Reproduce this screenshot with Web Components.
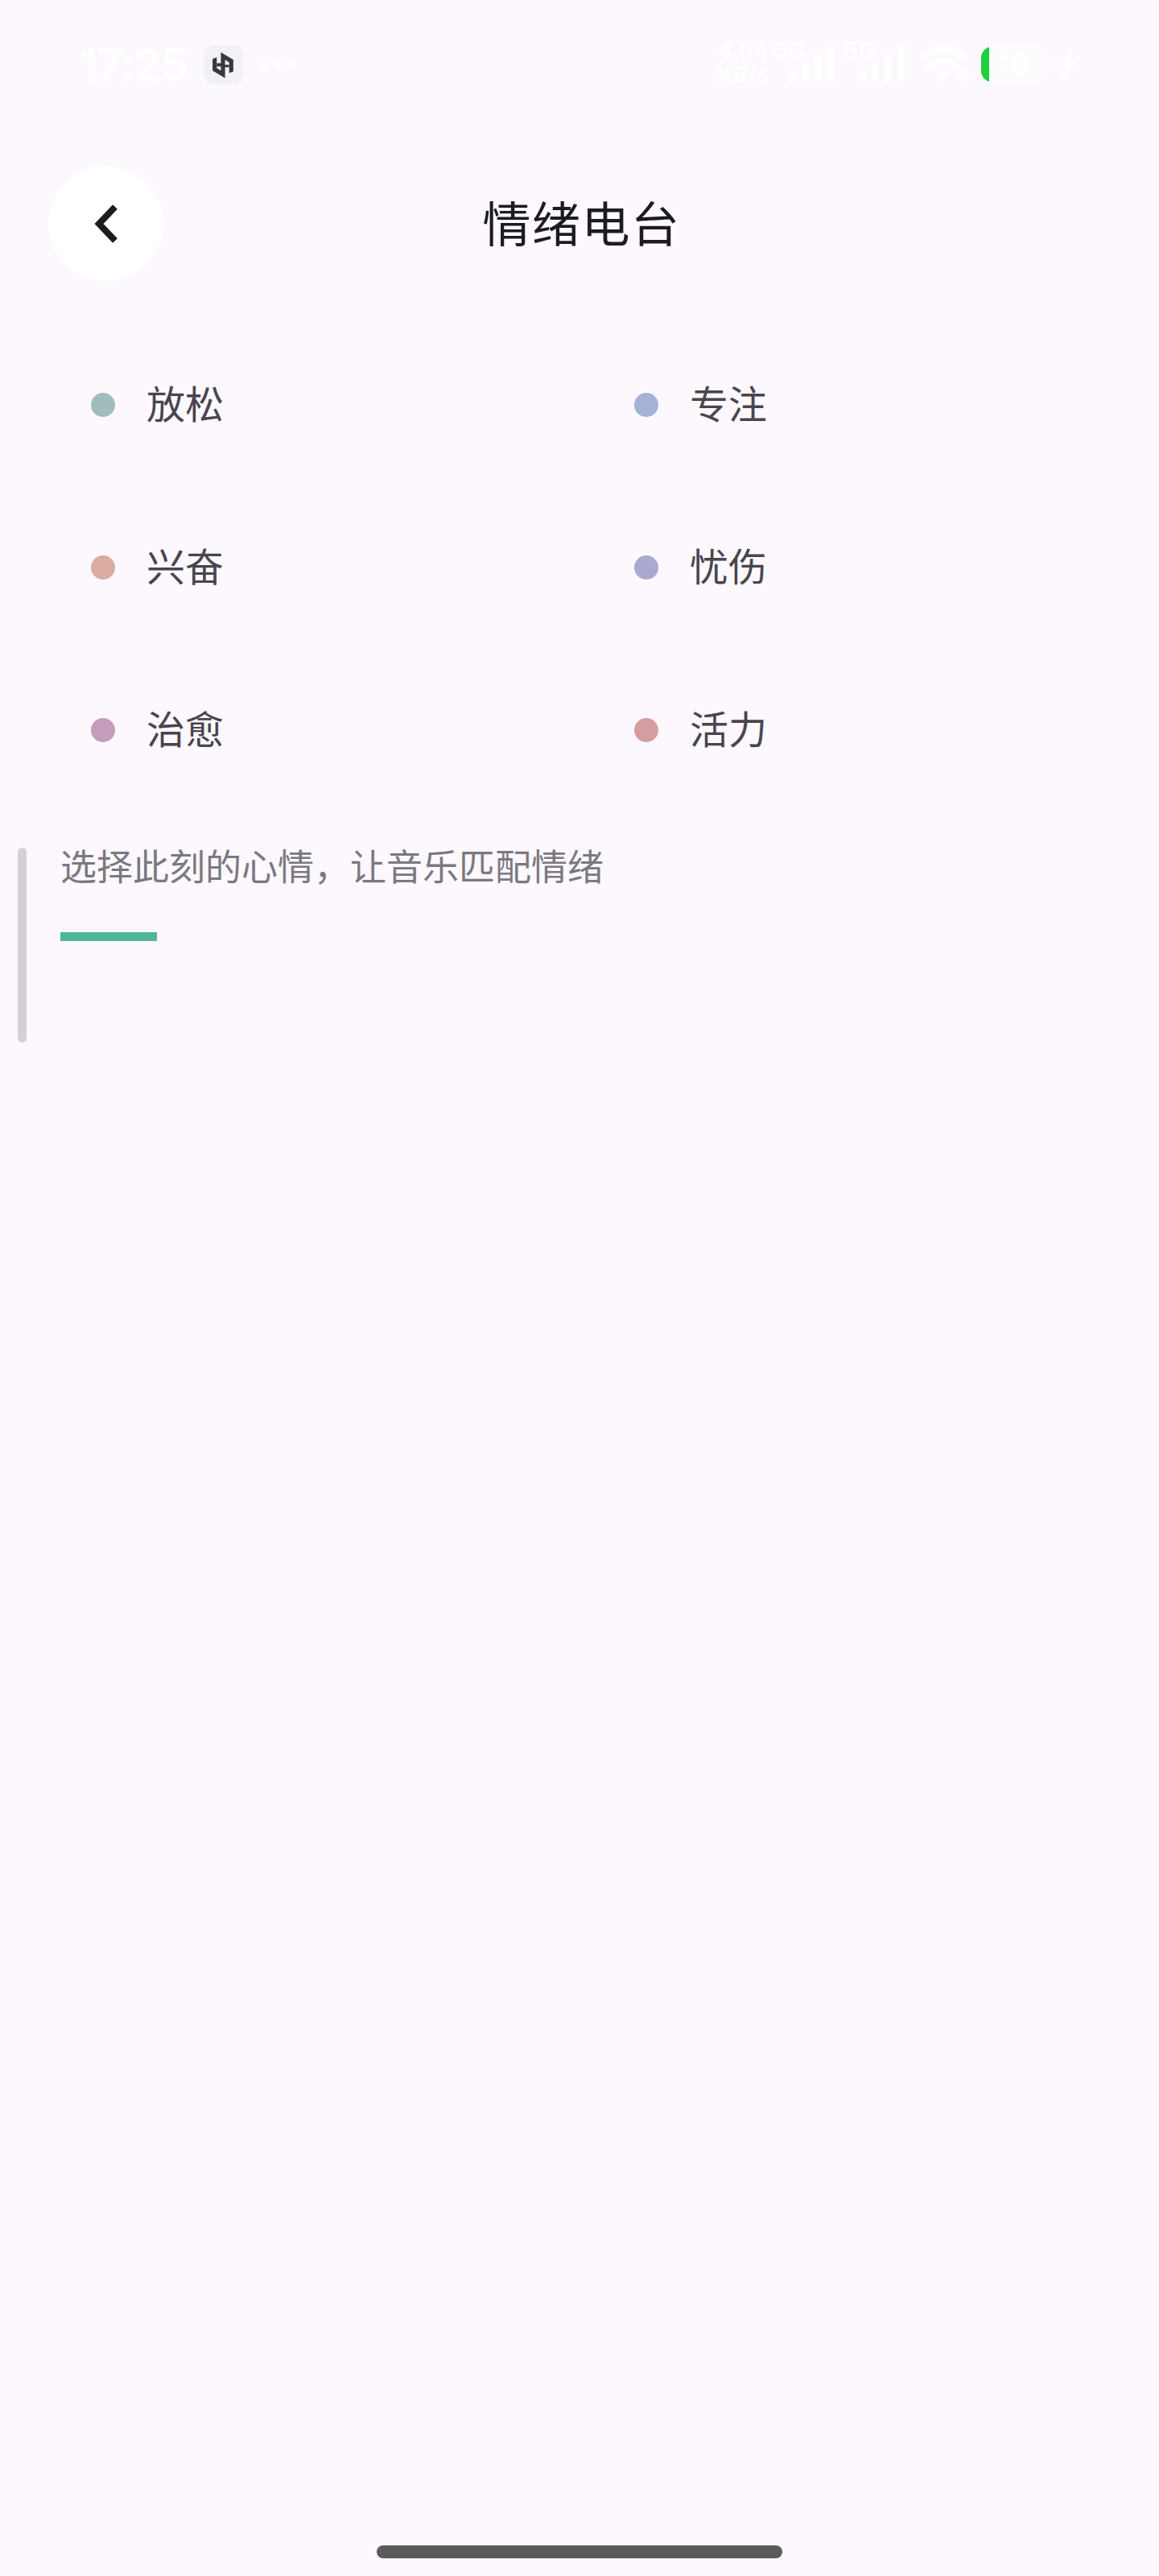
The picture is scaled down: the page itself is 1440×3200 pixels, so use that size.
<!DOCTYPE html>
<html lang="zh">
<head>
<meta charset="utf-8">
<title>情绪电台</title>
<style>
    html, body { margin: 0; background: #fcf8fe; }
    body { font-family: "Noto Sans CJK SC", "Noto Sans", sans-serif; }
</style>
</head>
<body>

<mood-page>
    <status-bar slot="status"></status-bar>
    <page-header slot="header">情绪电台</page-header>
    <mood-item color="#a0bdbd">放松</mood-item>
    <mood-item color="#a3b2d6">专注</mood-item>
    <mood-item color="#dbaca0">兴奋</mood-item>
    <mood-item color="#a8a8d0">忧伤</mood-item>
    <mood-item color="#c59cb9">治愈</mood-item>
    <mood-item color="#d69da0">活力</mood-item>
    <mood-hint slot="hint">选择此刻的心情，让音乐匹配情绪</mood-hint>
</mood-page>

<script>
class MoodPage extends HTMLElement {
    constructor() {
        super()
        this.attachShadow({ mode: 'open' }).innerHTML = `
            <style>
                :host { display: flex; flex-direction: column; height: 3200px; background: #fcf8fe; }
                #grid {
                    display: grid;
                    grid-template-columns: 675px 1fr;
                    grid-auto-rows: 202px;
                    padding: 53px 0 0 113px;
                }
                #home {
                    width: 504px;
                    height: 16px;
                    margin: auto auto 22px;
                    border-radius: 8px;
                    background: #5c5a5d;
                }
            </style>
            <slot name="status"></slot>
            <slot name="header"></slot>
            <div id="grid"><slot></slot></div>
            <slot name="hint"></slot>
            <div id="home"></div>
        `
    }
}

class StatusBar extends HTMLElement {
    constructor() {
        super()
        const bars = `
            <svg width="57" height="44" viewBox="0 0 57 44" fill="#fff">
                <rect x="0" y="30" width="10" height="14" rx="2"/>
                <rect x="16" y="21" width="9" height="23" rx="2"/>
                <rect x="32" y="10" width="9" height="34" rx="2"/>
                <rect x="48" y="0" width="9" height="44" rx="2"/>
            </svg>`
        this.attachShadow({ mode: 'open' }).innerHTML = `
            <style>
                :host {
                    display: flex;
                    align-items: center;
                    height: 161px;
                    box-sizing: border-box;
                    padding: 0 102px 0 98px;
                    color: #fff;
                    font-family: Inter, "Liberation Sans", sans-serif;
                }
                #time { font-size: 55px; font-weight: 600; line-height: 1; letter-spacing: -1px; }
                #app {
                    width: 49px; height: 49px;
                    margin-left: 20px;
                    border-radius: 12px;
                    background: #f1f2f4;
                    display: flex; align-items: center; justify-content: center;
                }
                #more { display: flex; gap: 8px; margin-left: 22px; }
                #more i { width: 9px; height: 9px; border-radius: 50%; background: #fff; }
                #right { margin-left: auto; margin-top: -12px; display: flex; align-items: flex-end; height: 52px; }
                #speed { width: 69px; font-size: 27px; font-weight: 700; line-height: 30px; white-space: nowrap; margin-bottom: -7px; }
                .net { position: relative; display: flex; align-items: flex-end; }
                .net b { position: absolute; font-size: 28px; line-height: 1; font-weight: 700; top: -8px; left: -19px; }
                #sim1 { margin-left: 19px; }
                #sim2 { margin-left: 30px; }
                #wifi { margin-left: 18px; overflow: visible; }
                #batt {
                    position: relative;
                    margin-left: 15px;
                    margin-bottom: -1px;
                    width: 81px; height: 44px;
                    border-radius: 14px;
                    background: #fefbfe;
                    overflow: hidden;
                    display: flex; align-items: center; justify-content: center;
                    font-size: 37px; font-weight: 700;
                }
                #batt i { position: absolute; left: 0; top: 0; bottom: 0; width: 10px; background: #1fd13e; }
                #nub { width: 6px; height: 16px; margin-bottom: 13px; border-radius: 0 5px 5px 0; background: #fefbfe; }
                #bolt { margin-left: 9px; margin-bottom: 2px; }
            </style>
            <span id="time">17:25</span>
            <div id="app">
                <svg width="26" height="32" viewBox="0 0 25 31" fill="#37393c">
                    <path d="M10 0 L25 9 V23 L20 25 V12 L15 9 V17 H5 V13 H10 Z"/>
                    <path d="M15 31 L0 22 V8 L5 6 V19 L10 22 V15 H20 V18 H15 Z"/>
                </svg>
            </div>
            <div id="more"><i></i><i></i><i></i></div>
            <div id="right">
                <div id="speed">4.04<br>KB/s</div>
                <div class="net" id="sim1"><b>5G</b>${bars}</div>
                <div class="net" id="sim2"><b>5G</b>${bars}</div>
                <svg id="wifi" width="62" height="44" viewBox="0 0 62 44" fill="#fff" stroke="#fff" stroke-linecap="round" stroke-linejoin="round">
                    <path d="M5 13 Q30 -4 55 13" fill="none" stroke-width="9"/>
                    <path d="M14 25 Q30 12 46 25" fill="none" stroke-width="9"/>
                    <path d="M23 35 Q30 31 37 35 L30 42 Z" stroke-width="3"/>
                    <path d="M55 26 L60 33 H50 Z" stroke-width="3"/>
                    <path d="M50 37 H60 L55 43 Z" stroke-width="3"/>
                </svg>
                <div id="batt"><i></i>10</div>
                <div id="nub"></div>
                <svg id="bolt" width="23" height="40" viewBox="0 0 23 40" fill="#fff">
                    <path d="M18 0 L0 23 H9 L5 40 L23 17 H14 Z"/>
                </svg>
            </div>
        `
    }
}

class PageHeader extends HTMLElement {
    constructor() {
        super()
        this.attachShadow({ mode: 'open' }).innerHTML = `
            <style>
                :host {
                    display: grid;
                    grid-template-columns: 143px 1fr 143px;
                    align-items: center;
                    margin-top: 45px;
                    padding: 0 60px;
                    height: 143px;
                }
                #back {
                    width: 143px; height: 143px;
                    border-radius: 50%;
                    background: #fff;
                    display: flex; align-items: center; justify-content: center;
                }
                #title { text-align: center; font-size: 60px; line-height: 1; color: #1c1b1f; letter-spacing: 1.5px; margin-top: -5px; padding-left: 5px; }
            </style>
            <div id="back">
                <svg width="32" height="48" viewBox="0 0 32 48" fill="none" stroke="#1c1b1f" stroke-width="8">
                    <path d="M27 3 L7 24 L27 45"/>
                </svg>
            </div>
            <div id="title"><slot></slot></div>
            <div></div>
        `
    }
}

class MoodItem extends HTMLElement {
    constructor() {
        super()
        this.attachShadow({ mode: 'open' }).innerHTML = `
            <style>
                :host { display: flex; align-items: center; gap: 39px; font-size: 48px; color: #49454e; height: 202px; }
                #dot { width: 30px; height: 30px; border-radius: 50%; }
                #label { margin-top: -8px; }
            </style>
            <span id="dot"></span>
            <span id="label"><slot></slot></span>
        `
    }
    connectedCallback() {
        this.shadowRoot.getElementById('dot').style.background = this.getAttribute('color')
    }
}

class MoodHint extends HTMLElement {
    constructor() {
        super()
        this.attachShadow({ mode: 'open' }).innerHTML = `
            <style>
                :host { display: flex; margin-top: 45px; padding-left: 22px; }
                #track { width: 11px; height: 242px; border-radius: 6px; background: #d4d1d6; }
                #body { margin: -10px 0 0 42px; }
                #text { font-size: 45px; line-height: 64px; color: #7b7880; }
                #line { width: 120px; height: 11px; margin-top: 51px; background: #52b69a; }
            </style>
            <div id="track"></div>
            <div id="body">
                <div id="text"><slot></slot></div>
                <div id="line"></div>
            </div>
        `
    }
}

customElements.define('mood-page', MoodPage)
customElements.define('status-bar', StatusBar)
customElements.define('page-header', PageHeader)
customElements.define('mood-item', MoodItem)
customElements.define('mood-hint', MoodHint)
</script>
</body>
</html>
